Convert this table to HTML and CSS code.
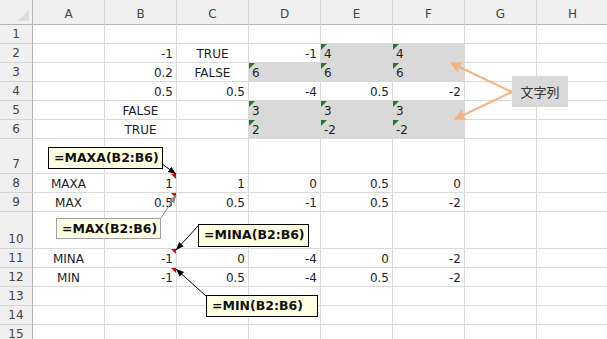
FILE: index.html
```html
<!DOCTYPE html>
<html lang="ja">
<head>
<meta charset="utf-8">
<link rel="stylesheet" href="styles.css">
</head>
<body>
<div class="sheet">
  <div class="grid">
    <div class="h corner"></div><div class="h col">A</div><div class="h col">B</div><div class="h col">C</div><div class="h col">D</div><div class="h col">E</div><div class="h col">F</div><div class="h col">G</div><div class="h col">H</div>

    <div class="h row">1</div><div class="c"></div><div class="c"></div><div class="c"></div><div class="c"></div><div class="c"></div><div class="c"></div><div class="c"></div><div class="c"></div>

    <div class="h row">2</div><div class="c"></div><div class="c r">-1</div><div class="c m">TRUE</div><div class="c r">-1</div><div class="c g t">4</div><div class="c g t">4</div><div class="c"></div><div class="c"></div>

    <div class="h row">3</div><div class="c"></div><div class="c r">0.2</div><div class="c m">FALSE</div><div class="c g t">6</div><div class="c g t">6</div><div class="c g t">6</div><div class="c"></div><div class="c"></div>

    <div class="h row">4</div><div class="c"></div><div class="c r">0.5</div><div class="c r">0.5</div><div class="c r">-4</div><div class="c r">0.5</div><div class="c r">-2</div><div class="c"></div><div class="c"></div>

    <div class="h row">5</div><div class="c"></div><div class="c m">FALSE</div><div class="c"></div><div class="c g t">3</div><div class="c g t">3</div><div class="c g t">3</div><div class="c"></div><div class="c"></div>

    <div class="h row">6</div><div class="c"></div><div class="c m">TRUE</div><div class="c"></div><div class="c g t">2</div><div class="c g t">-2</div><div class="c g t">-2</div><div class="c"></div><div class="c"></div>

    <div class="h row">7</div><div class="c"></div><div class="c"></div><div class="c"></div><div class="c"></div><div class="c"></div><div class="c"></div><div class="c"></div><div class="c"></div>

    <div class="h row">8</div><div class="c m">MAXA</div><div class="c r n">1</div><div class="c r">1</div><div class="c r">0</div><div class="c r">0.5</div><div class="c r">0</div><div class="c"></div><div class="c"></div>

    <div class="h row">9</div><div class="c m">MAX</div><div class="c r n">0.5</div><div class="c r">0.5</div><div class="c r">-1</div><div class="c r">0.5</div><div class="c r">-2</div><div class="c"></div><div class="c"></div>

    <div class="h row">10</div><div class="c"></div><div class="c"></div><div class="c"></div><div class="c"></div><div class="c"></div><div class="c"></div><div class="c"></div><div class="c"></div>

    <div class="h row">11</div><div class="c m">MINA</div><div class="c r n">-1</div><div class="c r">0</div><div class="c r">-4</div><div class="c r">0</div><div class="c r">-2</div><div class="c"></div><div class="c"></div>

    <div class="h row">12</div><div class="c m">MIN</div><div class="c r n">-1</div><div class="c r">0.5</div><div class="c r">-4</div><div class="c r">0.5</div><div class="c r">-2</div><div class="c"></div><div class="c"></div>

    <div class="h row">13</div><div class="c"></div><div class="c"></div><div class="c"></div><div class="c"></div><div class="c"></div><div class="c"></div><div class="c"></div><div class="c"></div>

    <div class="h row">14</div><div class="c"></div><div class="c"></div><div class="c"></div><div class="c"></div><div class="c"></div><div class="c"></div><div class="c"></div><div class="c"></div>

    <div class="h row">15</div><div class="c"></div><div class="c"></div><div class="c"></div><div class="c"></div><div class="c"></div><div class="c"></div><div class="c"></div><div class="c"></div>
  </div>

  <svg class="overlay" width="607" height="339" viewBox="0 0 607 339">
    <defs>
      <marker id="ab" viewBox="0 0 10 10" refX="10" refY="5" markerWidth="8" markerHeight="8" markerUnits="userSpaceOnUse" orient="auto"><path d="M0,1 L10,5 L0,9z" fill="#000"/></marker>
      <marker id="ag" viewBox="0 0 10 10" refX="10" refY="5" markerWidth="8" markerHeight="8" markerUnits="userSpaceOnUse" orient="auto"><path d="M0,1 L10,5 L0,9z" fill="#8c8c8c"/></marker>
      <marker id="ao" viewBox="0 0 10 10" refX="9" refY="5" markerWidth="12" markerHeight="12" markerUnits="userSpaceOnUse" orient="auto"><path d="M0,0 L10,5 L0,10 L2,5z" fill="#f4b183"/></marker>
    </defs>
    <line x1="162" y1="164" x2="176" y2="174" stroke="#000" stroke-width="1" marker-end="url(#ab)"/>
    <line x1="161" y1="218" x2="176" y2="195" stroke="#8c8c8c" stroke-width="1" marker-end="url(#ag)"/>
    <line x1="198" y1="226" x2="176" y2="250" stroke="#000" stroke-width="1" marker-end="url(#ab)"/>
    <line x1="206" y1="296" x2="176" y2="269" stroke="#000" stroke-width="1" marker-end="url(#ab)"/>
    <line x1="512" y1="92" x2="451" y2="63" stroke="#f4b183" stroke-width="2" marker-end="url(#ao)"/>
    <line x1="512" y1="92" x2="455" y2="119" stroke="#f4b183" stroke-width="2" marker-end="url(#ao)"/>
  </svg>

  <div class="note note-maxa">=MAXA(B2:B6)</div>
  <div class="note note-max">=MAX(B2:B6)</div>
  <div class="note note-mina">=MINA(B2:B6)</div>
  <div class="note note-min">=MIN(B2:B6)</div>
  <div class="label">文字列</div>
</div>
</body>
</html>
```

FILE: styles.css
```css
html, body {
  margin: 0;
  padding: 0;
  background: #fff;
}

.sheet {
  position: relative;
  width: 607px;
  height: 339px;
  overflow: hidden;
  font-family: "DejaVu Sans", sans-serif;
  font-size: 12px;
  color: #1c1c28;
}

.grid {
  display: grid;
  grid-template-columns: 33px repeat(8, 72px);
  grid-template-rows: 25px repeat(6, 19px) 35px 19px 19px 37px repeat(5, 19px);
}

.c {
  box-sizing: border-box;
  border-right: 1px solid #dadada;
  border-bottom: 1px solid #dadada;
  display: flex;
  align-items: flex-end;
  padding: 0 3px 1px 3px;
  line-height: 14px;
  white-space: nowrap;
  position: relative;
}

.r { justify-content: flex-end; }
.m { justify-content: center; }

.g {
  background: #d9d9d9;
  border-color: #d9d9d9;
}

.t::before {
  content: "";
  position: absolute;
  left: 0;
  top: 0;
  width: 6px;
  height: 6px;
  background: #1f7a2e;
  clip-path: polygon(0 0, 100% 0, 0 100%);
}

.n::after {
  content: "";
  position: absolute;
  right: 0;
  top: 0;
  width: 5px;
  height: 5px;
  background: #e00000;
  clip-path: polygon(0 0, 100% 0, 100% 100%);
}

.h {
  box-sizing: border-box;
  background: #f0f0f0;
  color: #444;
  display: flex;
  align-items: center;
  justify-content: center;
  font-size: 12px;
  position: relative;
}

.col {
  border-right: 1px solid #d4d4d4;
  border-bottom: 1px solid #b4b4b4;
  padding-top: 3px;
}

.row {
  border-right: 1px solid #b4b4b4;
  border-bottom: 1px solid #d4d4d4;
  align-items: flex-end;
  padding-bottom: 2px;
  line-height: 14px;
}

.corner {
  border-right: 1px solid #b4b4b4;
  border-bottom: 1px solid #b4b4b4;
}

.corner::after {
  content: "";
  position: absolute;
  left: 18px;
  top: 10px;
  width: 11px;
  height: 11px;
  background: #dcdcdc;
  clip-path: polygon(100% 0, 100% 100%, 0 100%);
}

.overlay {
  position: absolute;
  left: 0;
  top: 0;
  pointer-events: none;
}

.note {
  position: absolute;
  box-sizing: border-box;
  background: #ffffe1;
  border: 1px solid #000;
  font-family: "DejaVu Sans", sans-serif;
  font-weight: bold;
  font-size: 12.5px;
  line-height: 20px;
  color: #111;
  padding: 0 4px 0 5px;
  white-space: nowrap;
}

.note-maxa { left: 48px; top: 147px; width: 115px; height: 22px; }
.note-max { left: 56px; top: 218px; width: 105px; height: 21px; border-color: #a0a0a0; }
.note-mina { left: 198px; top: 224px; width: 111px; height: 23px; }
.note-min { left: 206px; top: 295px; width: 112px; height: 22px; }

.label {
  position: absolute;
  left: 512px;
  top: 76px;
  width: 56px;
  height: 31px;
  background: #d9d9d9;
  color: #333;
  font-family: "Noto Sans CJK JP", sans-serif;
  font-size: 13px;
  display: flex;
  align-items: center;
  justify-content: center;
}
```
